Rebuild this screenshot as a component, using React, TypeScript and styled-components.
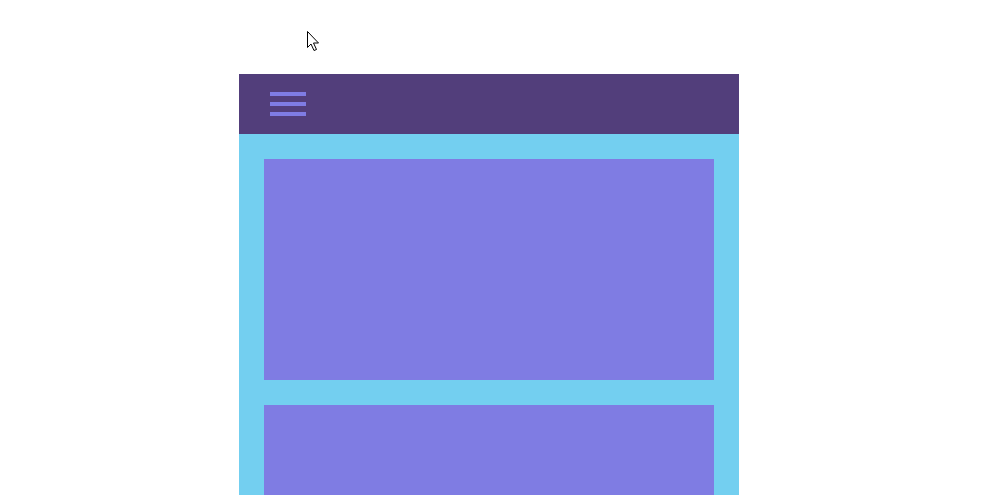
import styled, { createGlobalStyle } from "styled-components";

const GlobalStyle = createGlobalStyle`
	html, body {
		margin: 0;
		padding: 0;
		background: #ffffff;
		font-family: "Liberation Sans", Arial, sans-serif;
		overflow: hidden;
	}
`;

const Page = styled.div`
	position: relative;
	width: 990px;
	height: 495px;
	padding-top: 74px;
	box-sizing: border-box;
	overflow: hidden;
`;

const Phone = styled.div`
	width: 500px;
	margin-left: 239px;
	display: flex;
	flex-direction: column;
`;

const Header = styled.header`
	height: 60px;
	background-color: #523e7b;
	display: flex;
	align-items: center;
	padding-left: 31px;
`;

const Burger = styled.button`
	display: flex;
	flex-direction: column;
	gap: 6px;
	padding: 0;
	border: none;
	background: none;
	cursor: pointer;
	span {
		display: block;
		width: 36px;
		height: 4px;
		background-color: #7f7ce3;
	}
`;

const Content = styled.main`
	background-color: #73cff0;
	padding: 25px;
	display: flex;
	flex-direction: column;
	gap: 25px;
	height: 400px;
	overflow: hidden;
`;

const Card = styled.div<{ $height: number }>`
	flex-shrink: 0;
	height: ${(props) => props.$height}px;
	background-color: #7f7ce3;
`;

const Cursor = styled.svg`
	position: absolute;
	left: 306px;
	top: 30px;
`;

function App() {
	return (
		<>
			<GlobalStyle />
			<Page>
				<Phone>
					<Header>
						<Burger aria-label="menu">
							<span />
							<span />
							<span />
						</Burger>
					</Header>
					<Content>
						<Card $height={221} />
						<Card $height={221} />
					</Content>
				</Phone>
				<Cursor width="14" height="22" viewBox="0 0 14 22">
					<path
						d="M1.5 1.5 L1.5 17.5 L5 14 L8 20.5 L10.5 19.5 L7.5 13 L12.5 13 Z"
						fill="#ffffff"
						stroke="#000000"
						strokeWidth="1"
						strokeLinejoin="miter"
					/>
				</Cursor>
			</Page>
		</>
	);
}

export default App;
